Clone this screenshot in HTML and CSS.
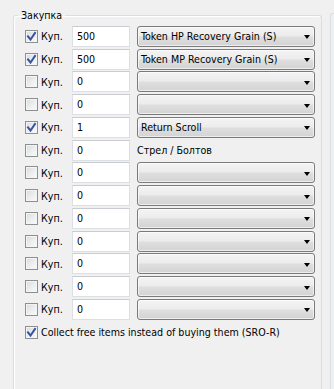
FILE: index.html
```html
<!DOCTYPE html>
<html>
<head>
<meta charset="utf-8">
<link rel="stylesheet" href="styles.css">
</head>
<body>
<div class="page">
  <fieldset class="group">
    <legend>Закупка</legend>
    <div class="rows">
      <div class="row">
        <label class="chk"><span class="cb on"><svg viewBox="0 0 13 13" width="13" height="13"><path d="M3 6.5 L5.5 9.5 L10 3" /></svg></span>Куп.</label>
        <div class="tb">500</div>
        <div class="combo"><span class="ctext">Token HP Recovery Grain (S)</span><span class="arrow"></span></div>
      </div>
      <div class="row">
        <label class="chk"><span class="cb on"><svg viewBox="0 0 13 13" width="13" height="13"><path d="M3 6.5 L5.5 9.5 L10 3" /></svg></span>Куп.</label>
        <div class="tb">500</div>
        <div class="combo"><span class="ctext">Token MP Recovery Grain (S)</span><span class="arrow"></span></div>
      </div>
      <div class="row">
        <label class="chk"><span class="cb"></span>Куп.</label>
        <div class="tb">0</div>
        <div class="combo"><span class="ctext"></span><span class="arrow"></span></div>
      </div>
      <div class="row">
        <label class="chk"><span class="cb"></span>Куп.</label>
        <div class="tb">0</div>
        <div class="combo"><span class="ctext"></span><span class="arrow"></span></div>
      </div>
      <div class="row">
        <label class="chk"><span class="cb on"><svg viewBox="0 0 13 13" width="13" height="13"><path d="M3 6.5 L5.5 9.5 L10 3" /></svg></span>Куп.</label>
        <div class="tb">1</div>
        <div class="combo"><span class="ctext">Return Scroll</span><span class="arrow"></span></div>
      </div>
      <div class="row">
        <label class="chk"><span class="cb"></span>Куп.</label>
        <div class="tb">0</div>
        <div class="plain">Стрел / Болтов</div>
      </div>
      <div class="row">
        <label class="chk"><span class="cb"></span>Куп.</label>
        <div class="tb">0</div>
        <div class="combo"><span class="ctext"></span><span class="arrow"></span></div>
      </div>
      <div class="row">
        <label class="chk"><span class="cb"></span>Куп.</label>
        <div class="tb">0</div>
        <div class="combo"><span class="ctext"></span><span class="arrow"></span></div>
      </div>
      <div class="row">
        <label class="chk"><span class="cb"></span>Куп.</label>
        <div class="tb">0</div>
        <div class="combo"><span class="ctext"></span><span class="arrow"></span></div>
      </div>
      <div class="row">
        <label class="chk"><span class="cb"></span>Куп.</label>
        <div class="tb">0</div>
        <div class="combo"><span class="ctext"></span><span class="arrow"></span></div>
      </div>
      <div class="row">
        <label class="chk"><span class="cb"></span>Куп.</label>
        <div class="tb">0</div>
        <div class="combo"><span class="ctext"></span><span class="arrow"></span></div>
      </div>
      <div class="row">
        <label class="chk"><span class="cb"></span>Куп.</label>
        <div class="tb">0</div>
        <div class="combo"><span class="ctext"></span><span class="arrow"></span></div>
      </div>
      <div class="row">
        <label class="chk"><span class="cb"></span>Куп.</label>
        <div class="tb">0</div>
        <div class="combo"><span class="ctext"></span><span class="arrow"></span></div>
      </div>
    </div>
    <label class="chk free"><span class="cb on"><svg viewBox="0 0 13 13" width="13" height="13"><path d="M3 6.5 L5.5 9.5 L10 3" /></svg></span>Collect free items instead of buying them (SRO-R)</label>
  </fieldset>
  <div class="side"></div>
</div>
</body>
</html>
```

FILE: styles.css
```css
html, body {
  margin: 0;
  padding: 0;
  background: #f0f0f0;
}
body {
  width: 334px;
  height: 389px;
  overflow: hidden;
  font-family: "DejaVu Sans Condensed", "DejaVu Sans", sans-serif;
  font-size: 10.6px;
  color: #000;
}
.page {
  display: flex;
  align-items: flex-start;
  padding-left: 13px;
  height: 389px;
  box-sizing: border-box;
}
.group {
  box-sizing: border-box;
  width: 309px;
  height: 380px;
  margin: 9px 0 0 0;
  padding: 0;
  border: 1px solid #d5dfe5;
  border-bottom: none;
  border-radius: 3px 3px 0 0;
  box-shadow: inset 1px 1px 0 #fff;
  min-width: 0;
}
.group legend {
  margin-left: 4px;
  padding: 0 3px;
  line-height: 13px;
  color: #000;
}
.rows {
  display: flex;
  flex-direction: column;
  padding: 3px 0 0 11px;
}
.row {
  display: flex;
  align-items: center;
  height: 22.75px;
}
.chk {
  display: flex;
  align-items: center;
  width: 47px;
  flex: none;
}
.cb {
  box-sizing: border-box;
  width: 13px;
  height: 13px;
  border: 1px solid #8e8f8f;
  background: linear-gradient(135deg, #d8dadc 0%, #eceff0 55%, #fafafa 100%);
  box-shadow: inset 0 0 0 1px #f4f4f4;
  margin-right: 3px;
  flex: none;
  position: relative;
}
.cb svg {
  position: absolute;
  left: -1px;
  top: -1px;
}
.cb svg path {
  fill: none;
  stroke: #3a55a0;
  stroke-width: 2;
  stroke-linecap: square;
}
.tb {
  box-sizing: border-box;
  width: 58px;
  height: 21px;
  background: #fff;
  border: 1px solid #dcdfe3;
  border-top-color: #c9ccd1;
  padding: 3px 0 0 4px;
  line-height: 13px;
  flex: none;
}
.combo {
  box-sizing: border-box;
  margin-left: 7px;
  width: 178px;
  height: 21px;
  border: 1px solid #7a7a7a;
  border-radius: 3px;
  background: linear-gradient(#f4f4f4 0%, #ececec 45%, #dedede 55%, #d3d3d3 100%);
  box-shadow: inset 0 0 0 1px rgba(255,255,255,0.6);
  display: flex;
  align-items: center;
  padding: 0 0 0 3px;
  flex: none;
}
.ctext {
  flex: 1;
  white-space: nowrap;
  line-height: 13px;
}
.arrow {
  width: 0;
  height: 0;
  border-left: 3.5px solid transparent;
  border-right: 3.5px solid transparent;
  border-top: 4px solid #000;
  margin: 2px 4px 0 0;
  flex: none;
}
.plain {
  margin-left: 7px;
  line-height: 13px;
}
.free {
  width: auto;
  margin: 5px 0 0 11px;
}
.side {
  box-sizing: border-box;
  margin: 13px 0 0 8px;
  width: 4px;
  height: 376px;
  border: 1px solid #d5dfe5;
  border-right: none;
  border-bottom: none;
  border-radius: 3px 0 0 0;
  flex: none;
}
```
